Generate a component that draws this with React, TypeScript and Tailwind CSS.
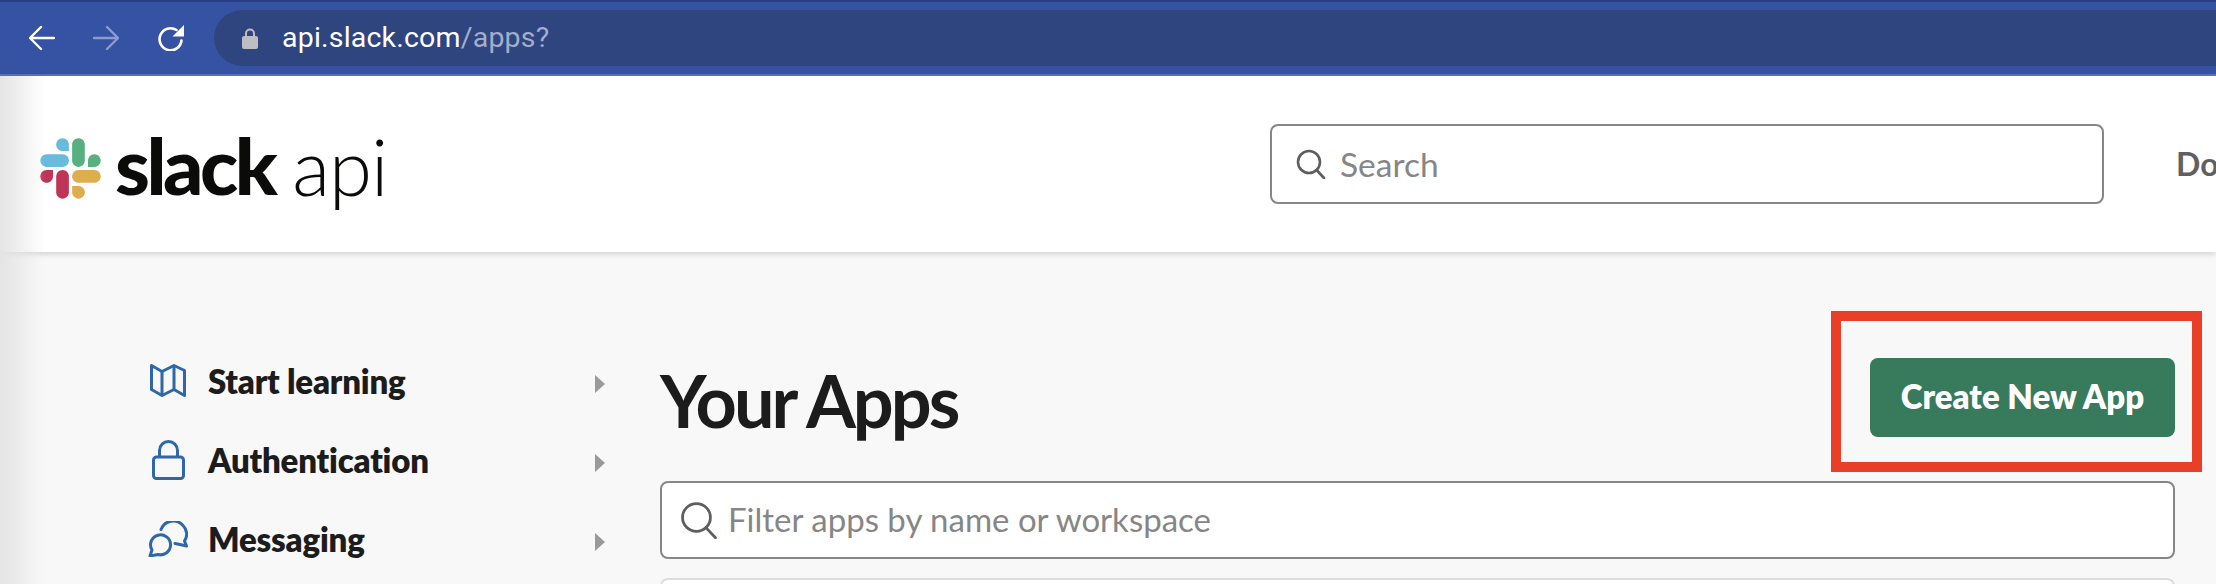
import React from 'react';

const lato = 'font-["Lato","Liberation_Sans",sans-serif]';

function SlackMark() {
  return (
    <svg viewBox="0 0 124 124" className="mt-2 h-[61px] w-[61px] shrink-0">
      <path fill="#bf3558" d="M26.4 78.2c0 7.1-5.8 12.9-12.9 12.9S.6 85.3.6 78.2c0-7.1 5.8-12.9 12.9-12.9h12.9v12.9z" />
      <path fill="#bf3558" d="M32.9 78.2c0-7.1 5.8-12.9 12.9-12.9s12.9 5.8 12.9 12.9v32.3c0 7.1-5.8 12.9-12.9 12.9s-12.9-5.8-12.9-12.9V78.2z" />
      <path fill="#68bbdd" d="M45.8 26.4c-7.1 0-12.9-5.8-12.9-12.9S38.7.6 45.8.6s12.9 5.8 12.9 12.9v12.9H45.8z" />
      <path fill="#68bbdd" d="M45.8 32.9c7.1 0 12.9 5.8 12.9 12.9s-5.8 12.9-12.9 12.9H13.5C6.4 58.7.6 52.9.6 45.8s5.8-12.9 12.9-12.9h32.3z" />
      <path fill="#57b07f" d="M97.6 45.8c0-7.1 5.8-12.9 12.9-12.9s12.9 5.8 12.9 12.9-5.8 12.9-12.9 12.9H97.6V45.8z" />
      <path fill="#57b07f" d="M91.1 45.8c0 7.1-5.8 12.9-12.9 12.9s-12.9-5.8-12.9-12.9V13.5C65.3 6.4 71.1.6 78.2.6s12.9 5.8 12.9 12.9v32.3z" />
      <path fill="#deae4e" d="M78.2 97.6c7.1 0 12.9 5.8 12.9 12.9s-5.8 12.9-12.9 12.9-12.9-5.8-12.9-12.9V97.6h12.9z" />
      <path fill="#deae4e" d="M78.2 91.1c-7.1 0-12.9-5.8-12.9-12.9s5.8-12.9 12.9-12.9h32.3c7.1 0 12.9 5.8 12.9 12.9s-5.8 12.9-12.9 12.9H78.2z" />
    </svg>
  );
}

function Arrow({ flip, className }: { flip?: boolean; className?: string }) {
  return (
    <svg viewBox="0 0 26 26" fill="none" stroke="currentColor" strokeWidth="2.4" strokeLinecap="round" strokeLinejoin="round" className={className}>
      {flip ? <path d="M1 13h24M14 2l11 11-11 11" /> : <path d="M25 13H1M12 2L1 13l11 11" />}
    </svg>
  );
}

function Reload() {
  return (
    <svg viewBox="0 0 27 26" className="h-[26px] w-[27px] text-white" fill="none">
      <path d="M24.500 15.500A11 11 0 1 1 19.500 5" stroke="currentColor" strokeWidth="2.6" strokeLinecap="round" />
      <path d="M27 0v11.500H15.500z" fill="currentColor" />
    </svg>
  );
}

function Lock() {
  return (
    <svg viewBox="0 0 16 21" className="h-[21px] w-4">
      <path d="M4 9V5.500a4 4 0 0 1 8 0V9" fill="none" stroke="#bcbec4" strokeWidth="2" />
      <rect x="0" y="8" width="16" height="13" rx="2" fill="#bcbec4" />
    </svg>
  );
}

function SearchIcon({ className, stroke }: { className: string; stroke: number }) {
  return (
    <svg viewBox="0 0 30 30" fill="none" stroke="#5e5e5e" strokeWidth={stroke} strokeLinecap="round" className={className}>
      <circle cx="13" cy="13" r="11" />
      <path d="M20.500 21l7.500 8" />
    </svg>
  );
}

function MapIcon() {
  return (
    <svg viewBox="0 0 36 33" fill="none" stroke="#2f67a8" strokeWidth="3" strokeLinejoin="round" className="h-[33px] w-9">
      <path d="M1.500 3v22.500L12 31.500l12-6 10.500 6V6.500L24 1.500 12 7.500 1.500 1.500z" />
      <path d="M12 7.500v24M24 1.500v24" />
    </svg>
  );
}

function LockOutline() {
  return (
    <svg viewBox="0 0 33 40" fill="none" stroke="#2f67a8" strokeWidth="3" className="h-10 w-[33px]">
      <path d="M7.500 17V10.500a9 9 0 0 1 18 0V17" />
      <rect x="1.500" y="17" width="30" height="21.500" rx="3" />
    </svg>
  );
}

function ChatIcon() {
  return (
    <svg viewBox="0 0 40 36" fill="none" stroke="#2f67a8" strokeWidth="3" strokeLinecap="round" strokeLinejoin="round" className="h-9 w-10">
      <path d="M13 8.500A13 13 0 0 1 35 4.500a12 12 0 0 1 1.500 15.500l2 5-6.500-1.500-5-1" />
      <path d="M2 35l2-6a10 10 0 1 1 6 4.500z" />
    </svg>
  );
}

const navItems = [
  { label: 'Start learning', icon: <MapIcon /> },
  { label: 'Authentication', icon: <LockOutline /> },
  { label: 'Messaging', icon: <ChatIcon /> },
];

export default function App() {
  return (
    <div className={`relative flex h-[584px] w-[2216px] flex-col overflow-hidden bg-[#f8f8f8] ${lato}`}>
      {/* browser chrome */}
      <div className="flex h-[76px] shrink-0 items-center border-t-2 border-b-2 border-t-[#2a3f7f] border-b-[#5b74b8] bg-[#3653a3] pl-[29px]">
        <Arrow className="h-[26px] w-[26px] text-white" />
        <Arrow flip className="ml-[38px] h-[26px] w-[26px] text-[#8c9dcc]" />
        <div className="ml-[38px]">
          <Reload />
        </div>
        <div className="ml-[30px] flex h-14 flex-1 items-center rounded-l-[28px] bg-[#2f4580] pl-7 font-['Roboto',sans-serif] text-[28.5px] tracking-[0.2px] text-white">
          <Lock />
          <span className="ml-[24px]">api.slack.com</span>
          <span className="text-[#a3aeca]">/apps?</span>
        </div>
      </div>

      {/* site header */}
      <header className="relative z-10 flex h-[176px] shrink-0 items-center overflow-hidden bg-white pl-10 shadow-[0_2px_6px_rgba(0,0,0,0.16)]">
        <div className="flex w-[1230px] shrink-0 items-center">
          <SlackMark />
          <span className="ml-[14px] text-[79px] leading-none font-black tracking-[-3.5px] text-[#0b0b0a]">slack</span>
          <span className="mt-1 ml-[18px] text-[78px] leading-none font-light tracking-[-1px] text-[#0b0b0a]">api</span>
        </div>
        <div className="flex h-20 w-[834px] shrink-0 items-center rounded-lg border-2 border-[#868686] bg-white pl-6">
          <SearchIcon className="h-[30px] w-[30px]" stroke={2.6} />
          <span className="ml-[14px] text-[33.5px] text-[#868686]">Search</span>
        </div>
        <span className="ml-[72px] text-[32px] font-bold whitespace-nowrap text-[#616061]">Do</span>
      </header>

      {/* page body */}
      <div className="flex flex-1">
        <nav className="w-[660px] shrink-0 pt-[91px] pl-[148px]">
          {navItems.map((item) => (
            <div key={item.label} className="flex h-[79px] w-[457px] items-center">
              <span className="mb-1 flex w-10 shrink-0 justify-center">{item.icon}</span>
              <span className="mb-0.5 ml-5 flex-1 text-[33px] font-extrabold tracking-[-0.2px] text-[#1d1c1d]">{item.label}</span>
              <span className="mt-0.5 h-0 w-0 border-y-[9px] border-l-[10px] border-y-transparent border-l-[#9a9a9a]" />
            </div>
          ))}
        </nav>

        <main className="flex-1 pt-[106px] pr-[41px]">
          <div className="flex h-[79px] items-center justify-between">
            <h1 className="mt-1 text-[72px] leading-none font-bold tracking-[-3px] text-[#1d1c1d]">Your Apps</h1>
            <button className="flex h-[79px] w-[305px] items-center justify-center rounded-lg bg-[#377a5c] pb-0.5 text-[33px] font-extrabold text-white">
              Create New App
            </button>
          </div>
          <div className="mt-[44px] flex h-[78px] items-center rounded-lg border-2 border-[#868686] bg-white pl-[18px]">
            <SearchIcon className="h-[38px] w-[38px]" stroke={2.2} />
            <span className="ml-[10px] text-[33px] text-[#868686]">Filter apps by name or workspace</span>
          </div>
          <div className="mt-[19px] h-10 rounded-lg border-2 border-[#dddddd] bg-white" />
        </main>
      </div>

      {/* shadow along the left edge */}
      <div className="pointer-events-none absolute top-[76px] bottom-0 left-0 z-20 w-[45px] bg-gradient-to-r from-[#e4e4e4] to-transparent" />

      {/* red annotation box */}
      <div className="pointer-events-none absolute top-[311px] left-[1831px] z-30 h-[161px] w-[371px] border-[10px] border-[#ea3f27]" />
    </div>
  );
}
